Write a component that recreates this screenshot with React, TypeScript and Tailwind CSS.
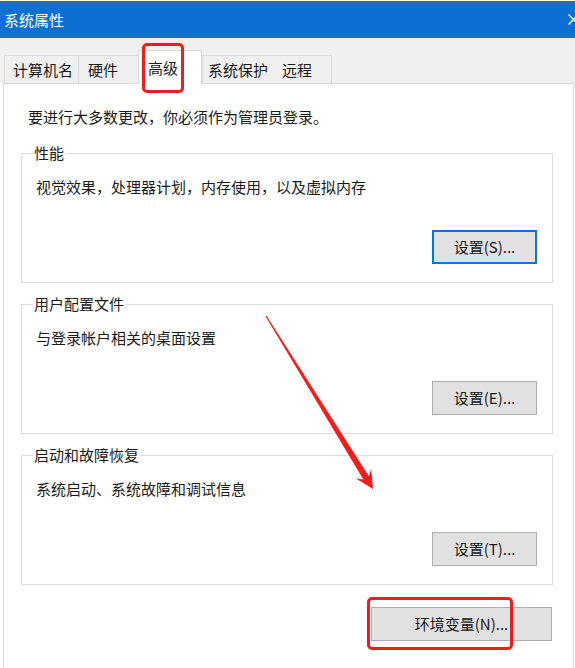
import React from "react";

const font = "font-['Noto_Sans_CJK_SC','Microsoft_YaHei',sans-serif]";

function Group({
  title,
  desc,
  button,
  focused,
  className = "",
}: {
  title: string;
  desc: string;
  button: string;
  focused?: boolean;
  className?: string;
}) {
  return (
    <fieldset
      className={`ml-[17px] w-[532px] border border-[#dcdcdc] px-0 pb-[18px] pt-0 ${className}`}
    >
      <legend className="ml-[11px] px-[1px] text-[15px] leading-[20px] text-[#1a1a1a]">
        {title}
      </legend>
      <div className="mt-[14px] pl-[14px] text-[15px] leading-[20px] text-[#1a1a1a]">
        {desc}
      </div>
      <div className="mt-[33px] flex justify-end pr-[15px]">
        <button
          className={`flex h-[34px] w-[105px] items-center justify-center bg-[#e1e1e1] text-[15px] leading-[20px] text-[#1a1a1a] ${
            focused ? "border-2 border-[#0a74d0]" : "border border-[#adadad]"
          }`}
        >
          {button}
        </button>
      </div>
    </fieldset>
  );
}

export default function App() {
  const tabs = [
    { label: "计算机名", w: "w-[74px]", pl: "pl-[8px]" },
    { label: "硬件", w: "w-[60px]", pl: "pl-[9px]" },
    { label: "高级", w: "w-[64px]", pl: "pl-[9px]", active: true },
    { label: "系统保护", w: "w-[73px]", pl: "pl-[5px]" },
    { label: "远程", w: "w-[57px]", pl: "pl-[7px]" },
  ];
  return (
    <div className={`relative h-[668px] w-[575px] overflow-hidden bg-white ${font}`}>
      {/* title bar */}
      <div className="mt-[1px] flex h-[37px] items-center bg-[#0c6fd2] pl-[4px] text-[15px] text-white">
        <span className="leading-[20px]">系统属性</span>
        <svg
          className="ml-auto mr-[-4px]"
          width="11"
          height="11"
          viewBox="0 0 11 11"
        >
          <path d="M0.5 0.5 L10.5 10.5 M10.5 0.5 L0.5 10.5" stroke="#ffffff" strokeWidth="1.3" />
        </svg>
      </div>

      {/* tab strip */}
      <div className="flex h-[45px] items-end bg-[#f0f0f0] pl-[4px]">
        {tabs.map((t, i) =>
          t.active ? (
            <div
              key={i}
              className={`relative z-10 -mb-[1px] flex h-[34px] items-center border-x border-t border-[#d9d9d9] bg-white ${t.w} ${t.pl} text-[15px] leading-[20px] text-[#1a1a1a]`}
            >
              {t.label}
            </div>
          ) : (
            <div
              key={i}
              className={`flex h-[28px] items-center border-t border-[#d9d9d9] bg-[#f0f0f0] ${
                i === 4 ? "border-r" : ""
              } ${i === 0 || i === 1 || i === 3 ? "border-l" : ""} ${t.w} ${t.pl} text-[15px] leading-[20px] text-[#1a1a1a]`}
            >
              {t.label}
            </div>
          )
        )}
      </div>

      {/* panel */}
      <div className="ml-[3px] mr-[1px] h-[600px] border-l border-r border-t border-[#d9d9d9] bg-white">
        <div className="pl-[24px] pt-[23px] text-[15px] leading-[20px] text-[#1a1a1a]">
          要进行大多数更改，你必须作为管理员登录。
        </div>
        <Group
          className="mt-[16px]"
          title="性能"
          desc="视觉效果，处理器计划，内存使用，以及虚拟内存"
          button="设置(S)..."
          focused
        />
        <Group
          className="mt-[11px]"
          title="用户配置文件"
          desc="与登录帐户相关的桌面设置"
          button="设置(E)..."
        />
        <Group
          className="mt-[11px]"
          title="启动和故障恢复"
          desc="系统启动、系统故障和调试信息"
          button="设置(T)..."
        />
        <div className="mt-[22px] flex justify-end pr-[21px]">
          <button className="flex h-[34px] w-[181px] items-center justify-center border border-[#adadad] bg-[#e1e1e1] text-[15px] leading-[20px] text-[#1a1a1a]">
            环境变量(N)...
          </button>
        </div>
      </div>

      {/* annotations */}
      <div className="absolute left-[142px] top-[43px] z-20 h-[50px] w-[42px] rounded-[5px] border-[3px] border-[#f21c1c]" />
      <div className="absolute left-[367px] top-[597px] z-20 h-[53px] w-[146px] rounded-[5px] border-[3px] border-[#f21c1c]" />
      <svg
        className="pointer-events-none absolute left-0 top-0 z-20"
        width="575"
        height="668"
        viewBox="0 0 575 668"
      >
        <polygon
          points="373,489 371.2,469 368.9,476.3 266.5,315.7 265.5,316.3 363.4,479.6 355.9,478.4"
          fill="#f41d1a"
        />
      </svg>
    </div>
  );
}
